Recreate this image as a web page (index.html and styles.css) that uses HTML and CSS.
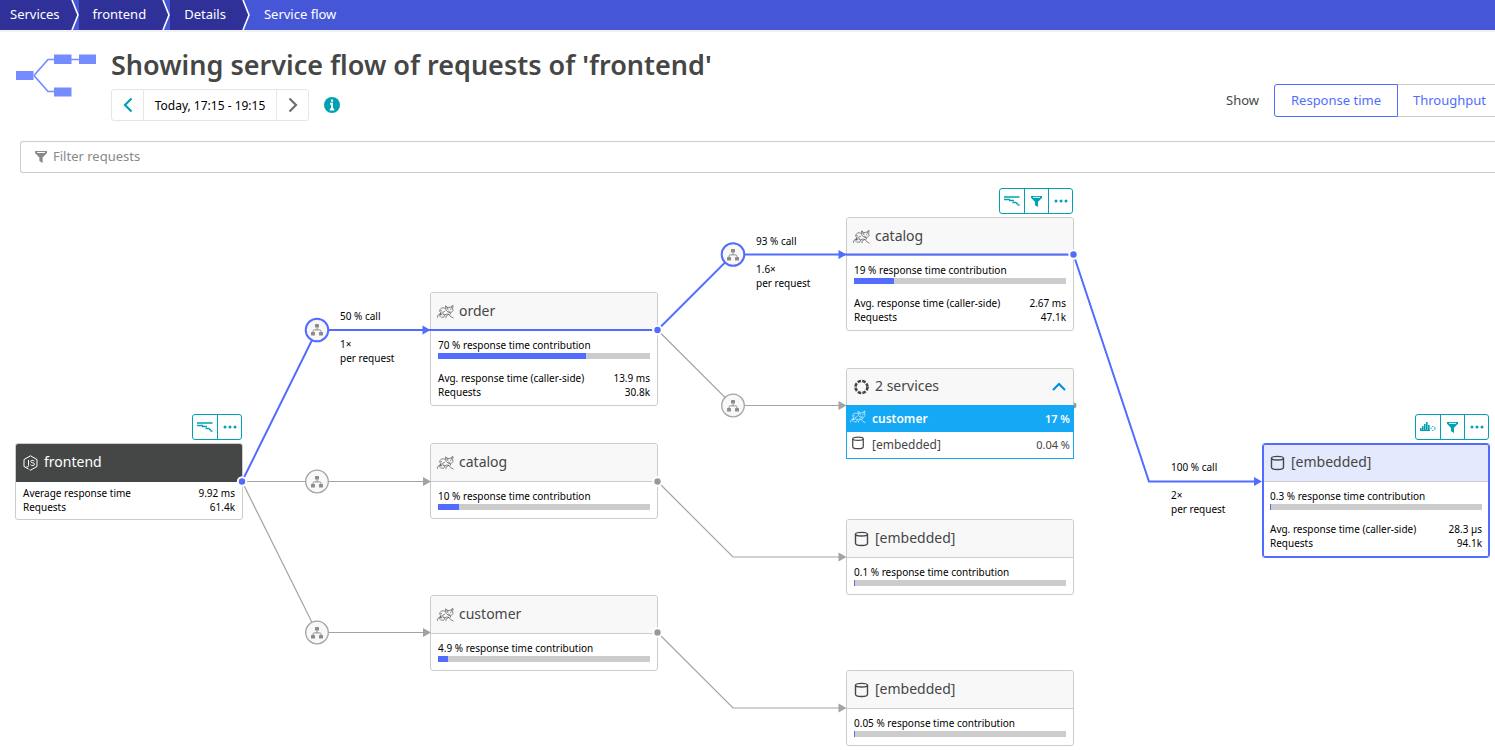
FILE: index.html
```html
<!DOCTYPE html>
<html lang="en">
<head>
<meta charset="utf-8">
<title>Service flow</title>
<link rel="stylesheet" href="styles.css">
</head>
<body>
<svg class="sprite" aria-hidden="true">
  <symbol id="chevron-sep" viewBox="0 0 8 30"><path d="M0 0h1l6 15-6 15H0z" fill="#2f3199"/><path d="M1 0l6 15-6 15" fill="none" stroke="#fff" stroke-width="1.6"/></symbol>
  <symbol id="funnel" viewBox="0 0 12 12"><path d="M0 0h12v2L7.6 6.6V12L4.4 10V6.600L0 2z" fill="currentColor"/><path d="M2.200 1.500h7.600" stroke="#fff" stroke-width="1"/></symbol>
  <symbol id="waterfall" viewBox="0 0 16 10"><path d="M0 1h15.500M0 3.500h6M5 4.500h5M8.500 6.500h4M12 7.500h2M13.500 9h2" fill="none" stroke="currentColor" stroke-width="1.300"/></symbol>
  <symbol id="dots" viewBox="0 0 14 4"><g fill="currentColor"><circle cx="2" cy="2" r="1.500"/><circle cx="7" cy="2" r="1.500"/><circle cx="12" cy="2" r="1.500"/></g></symbol>
  <symbol id="bars" viewBox="0 0 16 10"><path d="M0 9V6h1.600v3zM2 9V4h1.600v5zM4 9V2h1.600v7zM6 9V0h1.600v9zM8 9V3h1.600v6z" fill="currentColor"/><path d="M0 8.500h10" stroke="currentColor"/><circle cx="13" cy="6.500" r="2" fill="none" stroke="currentColor" stroke-dasharray="1.500 1"/></symbol>
  <symbol id="database" viewBox="0 0 14 16"><g fill="none" stroke="currentColor" stroke-width="1.400"><ellipse cx="7" cy="3.200" rx="6" ry="1.800"/><path d="M1 3.200v9c0 1.300 2.500 2.300 6 2.300s6-1 6-2.300v-9"/></g></symbol>
  <symbol id="cat" viewBox="0 0 18 16"><g fill="none" stroke="currentColor" stroke-width=".7"><path d="M9 1.500l2.500 1.800L14 3l3-2-.5 3.500.5 2-2.500 2.500-3-1L9.500 6z"/><path d="M10.500 4.500l1.500 1M14 5.500l1.500-1M12 7l1 .8 1.200-.8M10 3l2 1.500M16 2.500l-1.500 1.500"/><path d="M9 4.500C7 2.800 3.500 3.500 3 6c-.3 1.500.3 2.500 1.500 3L1 11.500 0 14.500M4.500 9L3 12l.5 1.500M3.500 6.500l2 .5M8.500 7L6 8.500l.5 2 2 .5L7 13.500H4.500M8.500 11c1.500-1 2.500-1 4-.5l2 2.500 3 1.500M12.500 10.500l-3 2v2M14.500 9l-1 2M2.500 10.500l3 .5"/></g></symbol>
  <symbol id="ring" viewBox="0 0 16 16"><circle cx="8" cy="8" r="6" fill="none" stroke="currentColor" stroke-width="2.600" stroke-dasharray="3.500 1.210"/></symbol>
  <symbol id="nodejs" viewBox="0 0 16 16"><g fill="none" stroke="currentColor" stroke-width="1"><path d="M6 14L1.500 11.500v-7L8 .8l6.500 3.700v7L8 15.200l-1-.5"/><path d="M6 5v5.500c0 1.200-.6 1.700-2 1.300M11.800 6C10.500 5 8.300 5.200 8.300 6.500c0 1.800 3.700.7 3.700 2.700 0 1.700-3 1.700-4 .5"/></g></symbol>
  <symbol id="tree" viewBox="0 0 14 14"><g fill="#8c8c8c"><rect x="5" y="1" width="4" height="3.600" rx=".6"/><rect x="1" y="9" width="4" height="3.600" rx=".6"/><rect x="9" y="9" width="4" height="3.600" rx=".6"/></g><path d="M7 4.500v2.300M3 9.500c0-2.200.2-2.600 1.500-2.600h5c1.300 0 1.500.4 1.500 2.600" fill="none" stroke="#8c8c8c"/></symbol>
</svg>

<nav class="crumbs" aria-label="Breadcrumb">
  <ol>
    <li><a href="#services">Services</a><svg><use href="#chevron-sep"/></svg></li>
    <li><a href="#frontend">frontend</a><svg><use href="#chevron-sep"/></svg></li>
    <li><a href="#details">Details</a><svg><use href="#chevron-sep"/></svg></li>
    <li class="current"><a href="#flow" aria-current="page">Service flow</a></li>
  </ol>
</nav>

<header class="page-head">
  <svg class="flow-icon" viewBox="0 0 80 43" aria-hidden="true">
    <path d="M18 21.500L32 5.500h40M18 21.500l14 16h10" fill="none" stroke="#748cff" stroke-width="1.700"/>
    <g fill="#748cff"><path d="M0 17h17.500v9H0zM38 .500h17.500v9.500H38zM63 .500h17v9.500H63zM38 33.500h17.500v9H38z"/></g>
  </svg>
  <div class="heading">
    <h1>Showing service flow of requests of 'frontend'</h1>
    <div class="timeframe">
      <div class="range">
        <button type="button" class="prev" aria-label="Previous timeframe"><svg viewBox="0 0 10 16"><path d="M8.500 1.500L2 8l6.500 6.500" fill="none" stroke="currentColor" stroke-width="2.200"/></svg></button>
        <button type="button" class="label">Today, 17:15 - 19:15</button>
        <button type="button" class="next" aria-label="Next timeframe"><svg viewBox="0 0 10 16"><path d="M1.500 1.500L8 8l-6.500 6.500" fill="none" stroke="currentColor" stroke-width="2.200"/></svg></button>
      </div>
      <svg class="info" viewBox="0 0 16 16" aria-label="Information"><circle cx="8" cy="8" r="8" fill="#00a1b2"/><path d="M8 2.500v2.300M6 6.800h2v5.500M5.800 12.500h4.400" fill="none" stroke="#fff" stroke-width="2"/></svg>
    </div>
  </div>
  <div class="metric">
    <span>Show</span>
    <div class="switch">
      <button type="button" class="active">Response time</button><button type="button">Throughput</button>
    </div>
  </div>
</header>

<label class="filter"><svg><use href="#funnel"/></svg><input type="text" placeholder="Filter requests" aria-label="Filter requests"></label>

<main class="canvas">
  <article class="node root n-frontend">
    <div class="tools"><button type="button" aria-label="Waterfall"><svg class="i-wide"><use href="#waterfall"/></svg></button><button type="button" aria-label="More"><svg class="i-dots"><use href="#dots"/></svg></button></div>
    <h2><svg><use href="#nodejs"/></svg>frontend</h2>
    <dl><div><dt>Average response time</dt><dd>9.92 ms</dd></div><div><dt>Requests</dt><dd>61.4k</dd></div></dl>
  </article>

  <article class="node n-order">
    <h2><svg class="i-cat"><use href="#cat"/></svg>order</h2>
    <div class="body"><p>70 % response time contribution</p><div class="bar"><span style="width:70%"></span></div>
    <dl><div><dt>Avg. response time (caller-side)</dt><dd>13.9 ms</dd></div><div><dt>Requests</dt><dd>30.8k</dd></div></dl></div>
  </article>

  <article class="node n-catalog-direct">
    <h2><svg class="i-cat"><use href="#cat"/></svg>catalog</h2>
    <div class="body"><p>10 % response time contribution</p><div class="bar"><span style="width:10%"></span></div></div>
  </article>

  <article class="node n-customer">
    <h2><svg class="i-cat"><use href="#cat"/></svg>customer</h2>
    <div class="body"><p>4.9 % response time contribution</p><div class="bar"><span style="width:4.9%"></span></div></div>
  </article>

  <article class="node n-catalog">
    <div class="tools"><button type="button" aria-label="Waterfall"><svg class="i-wide"><use href="#waterfall"/></svg></button><button type="button" aria-label="Filter"><svg class="i-fun"><use href="#funnel"/></svg></button><button type="button" aria-label="More"><svg class="i-dots"><use href="#dots"/></svg></button></div>
    <h2><svg class="i-cat"><use href="#cat"/></svg>catalog</h2>
    <div class="body"><p>19 % response time contribution</p><div class="bar"><span style="width:19%"></span></div>
    <dl><div><dt>Avg. response time (caller-side)</dt><dd>2.67 ms</dd></div><div><dt>Requests</dt><dd>47.1k</dd></div></dl></div>
  </article>

  <article class="node n-embedded-catalog">
    <h2><svg><use href="#database"/></svg>[embedded]</h2>
    <div class="body"><p>0.1 % response time contribution</p><div class="bar"><span style="width:0.1%"></span></div></div>
  </article>

  <article class="node n-embedded-customer">
    <h2><svg><use href="#database"/></svg>[embedded]</h2>
    <div class="body"><p>0.05 % response time contribution</p><div class="bar"><span style="width:0.05%"></span></div></div>
  </article>

  <article class="node selected n-embedded">
    <div class="tools"><button type="button" aria-label="Distribution"><svg class="i-wide"><use href="#bars"/></svg></button><button type="button" aria-label="Filter"><svg class="i-fun"><use href="#funnel"/></svg></button><button type="button" aria-label="More"><svg class="i-dots"><use href="#dots"/></svg></button></div>
    <h2><svg><use href="#database"/></svg>[embedded]</h2>
    <div class="body"><p>0.3 % response time contribution</p><div class="bar"><span style="width:0.3%"></span></div>
    <dl><div><dt>Avg. response time (caller-side)</dt><dd>28.3 µs</dd></div><div><dt>Requests</dt><dd>94.1k</dd></div></dl></div>
  </article>

  <svg class="edges" width="1495" height="578" viewBox="0 173 1495 578" aria-hidden="true">
    <g fill="none" stroke="#a3a3a3" stroke-width="1.200">
      <path d="M242 481.500h184M242 481.500L317 632.500h109"/>
      <path d="M657.500 330L733 405.500h108M657.500 481.500L733 557h108M657.500 632.500L733 708h108"/>
    </g>
    <g fill="none" stroke="#526cff" stroke-width="2">
      <path d="M242 481.500L317 330h335M657.500 330L733 254.500h336M1073.500 254.500L1149 481.500h106"/>
    </g>
    <g fill="#a3a3a3"><path d="M423 477l8 4.500-8 4.500zM423 628l8 4.500-8 4.500zM838.500 401l8 4.500-8 4.500zM838.500 552.500l8 4.500-8 4.500zM838.500 703.500l8 4.500-8 4.500z"/></g>
    <g fill="#526cff"><path d="M422.500 325.500l8 4.500-8 4.500zM838.500 250l8 4.500-8 4.500zM1254 477l8 4.500-8 4.500z"/></g>
    <g fill="#526cff" stroke="#fff" stroke-width="2"><circle cx="242" cy="481.500" r="4.200"/><circle cx="657.500" cy="330" r="4.200"/><circle cx="1073.500" cy="254.500" r="4.200"/></g>
    <g fill="#999" stroke="#fff" stroke-width="2"><circle cx="657.500" cy="481.500" r="4.200"/><circle cx="657.500" cy="632.500" r="4.200"/><circle cx="1073.500" cy="405.500" r="4"/></g>
    <g fill="#f8f8f8" stroke="#a3a3a3" stroke-width="1.300"><circle cx="317" cy="481.500" r="11.300"/><circle cx="317" cy="632.500" r="11.300"/><circle cx="733" cy="405.500" r="11.300"/></g>
    <g fill="#f8f8f8" stroke="#526cff" stroke-width="2"><circle cx="317" cy="330" r="11.300"/><circle cx="733" cy="254.500" r="11.300"/></g>
    <use href="#tree" x="310" y="323" width="14" height="14"/><use href="#tree" x="310" y="475" width="14" height="14"/><use href="#tree" x="310" y="626" width="14" height="14"/><use href="#tree" x="726" y="248" width="14" height="14"/><use href="#tree" x="726" y="399" width="14" height="14"/>
  </svg>

  <article class="node group n-services">
    <h2><svg><use href="#ring"/></svg>2 services<button type="button" aria-label="Collapse services"><svg viewBox="0 0 14 9"><path d="M1 8l6-6 6 6" fill="none" stroke="currentColor" stroke-width="2"/></svg></button></h2>
    <ul>
      <li class="on"><svg class="i-cat"><use href="#cat"/></svg><span>customer</span><b>17 %</b></li>
      <li><svg><use href="#database"/></svg><span>[embedded]</span><b>0.04 %</b></li>
    </ul>
  </article>

  <div class="call c-order"><p>50 % call</p><p>1×</p><p>per request</p></div>
  <div class="call c-catalog"><p>93 % call</p><p>1.6×</p><p>per request</p></div>
  <div class="call c-embedded"><p>100 % call</p><p>2×</p><p>per request</p></div>
</main>
</body>
</html>
```
FILE: styles.css
```css
* { box-sizing: border-box; }
body { margin: 0; background: #fff; color: #454646; font-family: "Noto Sans", "Open Sans", sans-serif; font-size: 13px; overflow-x: hidden; }
h1, h2, p, ol, ul, dl, dd { margin: 0; padding: 0; }
ol, ul { list-style: none; }
button { margin: 0; padding: 0; border: 0; background: none; color: inherit; font: inherit; }
.sprite { position: absolute; width: 0; height: 0; }

.crumbs { background: #4557d7; border-bottom: 2px solid #f2f2f2; height: 32px; }
.crumbs ol { display: flex; height: 30px; }
.crumbs li { display: flex; }
.crumbs a { padding: 0 16px 0 14px; background: #2f3199; color: #fff; line-height: 28px; text-decoration: none; }
.crumbs li:first-child a { padding: 0 11px 0 10px; }
.crumbs .current a { background: none; }
.crumbs svg { width: 8px; height: 30px; }

.page-head { display: flex; height: 109px; padding-left: 16px; }
.flow-icon { width: 80px; height: 43px; margin-top: 22px; }
.heading { flex: 1; margin-left: 15px; padding-top: 15px; }
h1 { font-size: 27px; font-weight: 600; line-height: 36px; }
.timeframe { display: flex; align-items: center; gap: 15px; margin-top: 6px; }
.range { display: flex; height: 32px; border: 1px solid #e6e6e6; border-radius: 3px; }
.range svg { display: block; width: 10px; height: 16px; margin: 0 auto; }
.range .prev { width: 31px; color: #00a1b2; }
.range .next { width: 31px; color: #6d6d6d; }
.range .label { width: 134px; border: solid #e6e6e6; border-width: 0 1px; color: #000; font-size: 12px; }
.info { width: 16px; height: 16px; }
.metric { display: flex; align-items: center; gap: 15px; height: 33px; margin-top: 52px; }
.metric span { padding-bottom: 2px; }
.switch { display: flex; height: 33px; }
.switch button { width: 97px; padding: 0 0 2px 6px; border: solid #ccc; border-width: 1px 0; color: #526cff; }
.switch .active { width: 124px; padding-left: 0; border: 1px solid #526cff; border-radius: 3px 0 0 3px; }

.filter { display: flex; align-items: center; height: 32px; margin-left: 20px; padding-left: 14px; border: 1px solid #ccc; border-right: 0; border-radius: 3px 0 0 3px; color: #898989; }
.filter svg { width: 12px; height: 12px; }
.filter input { flex: 1; padding: 0 6px 2px; border: 0; outline: 0; background: none; font: inherit; }
.filter input::placeholder { color: #898989; opacity: 1; }

.canvas { position: relative; min-height: 578px; overflow: hidden; }
.edges { position: absolute; left: 0; top: 0; pointer-events: none; }
.node { position: absolute; width: 228px; border: 1px solid #ccc; border-radius: 3px; background: #fff; color: #000; font-size: 10px; line-height: 14px; }
.node h2 { display: flex; align-items: center; gap: 5px; height: 38px; padding: 0 7px 2px 6px; border-bottom: 1px solid #ccc; border-radius: 2px 2px 0 0; background: #f8f8f8; color: #454646; font-size: 14px; font-weight: 400; }
.node svg { width: 17px; height: 16px; }
.node h2 > svg { margin-top: 2px; }
.body { padding: 7px 7px 6px; }
.bar { height: 6px; margin: 1px 0 2px; background: #ccc; }
.bar span { display: block; height: 6px; background: #526cff; }
dl div { display: flex; justify-content: space-between; }
.body dl { margin-top: 12px; }
.root h2 { background: #454646; border-color: #454646; color: #fff; }
.root dl { padding: 4px 7px 5px; }
.selected { border-color: #526cff; outline: 1px solid #526cff; outline-offset: -2px; }
.selected h2 { background: #e5e9fd; }
.selected .body { padding-bottom: 7px; }

.n-frontend { left: 15px; top: 270px; }
.n-order { left: 430px; top: 119px; }
.n-catalog-direct { left: 430px; top: 270px; }
.n-customer { left: 430px; top: 422px; }
.n-catalog { left: 846px; top: 44px; }
.n-services { left: 846px; top: 195px; }
.n-embedded-catalog { left: 846px; top: 346px; }
.n-embedded-customer { left: 846px; top: 497px; }
.n-embedded { left: 1262px; top: 270px; }

.tools { position: absolute; right: 0; bottom: calc(100% + 4px); display: flex; height: 26px; border: 1px solid #00a1b2; border-radius: 3px; color: #00a1b2; }
.tools button { width: 24px; }
.tools svg { display: block; margin: 0 auto; }
.tools button + button { border-left: 1px solid #00a1b2; }
.tools .i-wide { width: 16px; height: 10px; }
.tools .i-fun { width: 11px; height: 11px; }
.tools .i-dots { width: 14px; height: 4px; }

.group { border-bottom: 0; }
.group h2 { height: 36px; border: 0; }
.group h2 button { margin-left: auto; color: #008cdb; }
.group h2 button svg { display: block; width: 14px; height: 9px; }
.group ul { margin: 0 -1px; border: 1px solid #14a8f5; background: #fff; color: #454646; }
.group li { display: flex; align-items: center; height: 26px; padding: 0 3px; font-size: 12px; }
.group li svg { width: 16px; height: 14px; margin: 0 6px 4px 0; }
.group li b { margin-left: auto; font-size: 11px; font-weight: 400; }
.group .on { background: #14a8f5; color: #fff; font-weight: 600; }
.group .on b { font-weight: 600; }

.call { position: absolute; color: #000; font-size: 10px; line-height: 14px; }
.call p:first-child { margin-bottom: 14px; }
.c-order { left: 340px; top: 136px; }
.c-catalog { left: 756px; top: 61px; }
.c-embedded { left: 1171px; top: 287px; }
```
